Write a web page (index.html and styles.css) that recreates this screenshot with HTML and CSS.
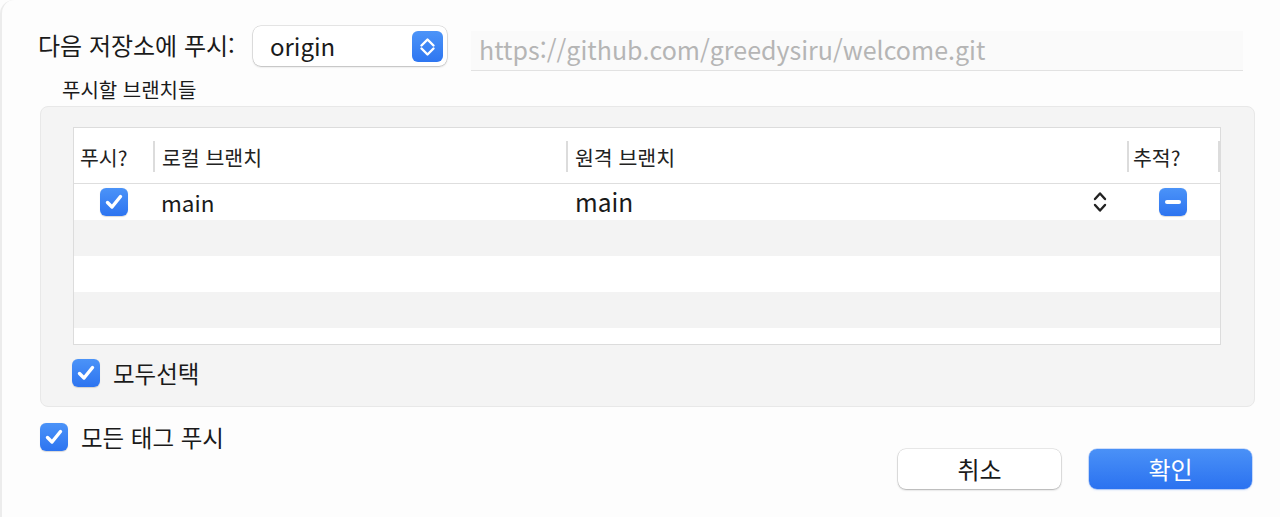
FILE: index.html
```html
<!DOCTYPE html>
<html lang="ko">
<head>
<meta charset="utf-8">
<title>푸시</title>
<link rel="stylesheet" href="styles.css">
</head>
<body>
<div class="dialog">
  <div class="remote-row">
    <span class="remote-label">다음 저장소에 푸시:</span>
    <div class="popup">
      <span class="popup-text">origin</span>
      <span class="stepper">
        <svg width="31" height="31" viewBox="0 0 31 31"><path d="M9.5 14.5 L15.5 8.5 L21.5 14.5 M9.5 17.5 L15.5 23.5 L21.5 17.5" fill="none" stroke="#fff" stroke-width="2.4" stroke-linecap="round" stroke-linejoin="round"/></svg>
      </span>
    </div>
    <div class="url-field">https://github.com/greedysiru/welcome.git</div>
  </div>

  <div class="branches-label">푸시할 브랜치들</div>

  <div class="group">
    <div class="table">
      <div class="thead">
        <div class="th c1"><span>푸시?</span></div>
        <div class="th c2"><span class="sep"></span><span>로컬 브랜치</span></div>
        <div class="th c3"><span class="sep"></span><span>원격 브랜치</span></div>
        <div class="th c4"><span class="sep"></span><span>추적?</span></div>
        <div class="th c5"><span class="sep"></span></div>
      </div>
      <div class="tbody">
        <div class="tr">
          <div class="td c1 center">
            <span class="checkbox"><svg width="28" height="28" viewBox="0 0 28 28"><path d="M7.5 14.5 L12 19 L20.5 8.5" fill="none" stroke="#fff" stroke-width="3.4" stroke-linecap="round" stroke-linejoin="round"/></svg></span>
          </div>
          <div class="td c2"><span class="local">main</span></div>
          <div class="td c3 remote">
            <span class="remote-name">main</span>
            <svg class="row-stepper" width="14" height="24" viewBox="0 0 14 24"><path d="M2 9 L7 3.5 L12 9 M2 15 L7 20.5 L12 15" fill="none" stroke="#222" stroke-width="2.4" stroke-linecap="round" stroke-linejoin="round"/></svg>
          </div>
          <div class="td c4 center">
            <span class="checkbox"><span class="minus"></span></span>
          </div>
          <div class="td c5"></div>
        </div>
        <div class="tr alt"></div>
        <div class="tr"></div>
        <div class="tr alt"></div>
        <div class="tr short"></div>
      </div>
    </div>
    <div class="check-row select-all">
      <span class="checkbox"><svg width="28" height="28" viewBox="0 0 28 28"><path d="M7.5 14.5 L12 19 L20.5 8.5" fill="none" stroke="#fff" stroke-width="3.4" stroke-linecap="round" stroke-linejoin="round"/></svg></span>
      <span class="check-label">모두선택</span>
    </div>
  </div>

  <div class="footer">
    <div class="check-row tags">
      <span class="checkbox"><svg width="28" height="28" viewBox="0 0 28 28"><path d="M7.5 14.5 L12 19 L20.5 8.5" fill="none" stroke="#fff" stroke-width="3.4" stroke-linecap="round" stroke-linejoin="round"/></svg></span>
      <span class="check-label">모든 태그 푸시</span>
    </div>
    <div class="buttons">
      <button class="btn cancel">취소</button>
      <button class="btn ok">확인</button>
    </div>
  </div>
</div>
</body>
</html>
```

FILE: styles.css
```css
* { box-sizing: border-box; }

html, body {
  margin: 0;
  padding: 0;
  height: 100%;
}

body {
  background: #fdfdfd;
  font-family: "Noto Sans CJK KR", "Noto Sans", sans-serif;
  color: #1a1a1a;
  overflow: hidden;
}

.dialog {
  height: 517px;
  border-left: 2px solid #ececec;
  border-top-left-radius: 14px;
  padding-top: 26px;
}

/* top row */
.remote-row {
  display: flex;
  align-items: flex-start;
  margin-left: 36px;
  height: 45px;
}

.remote-label {
  font-size: 24px;
  line-height: 38px;
  width: 200px;
  white-space: nowrap;
  margin-right: 15px;
}

.popup {
  width: 194px;
  height: 40px;
  background: #fff;
  border-radius: 8px;
  box-shadow: 0 0 0 0.5px rgba(0,0,0,0.18), 0 1px 2px rgba(0,0,0,0.18);
  display: flex;
  align-items: center;
  justify-content: space-between;
  padding: 0 4px 0 17px;
}

.popup-text {
  font-size: 24px;
  line-height: 38px;
  color: #1a1a1a;
}

.stepper {
  width: 31px;
  height: 31px;
  border-radius: 6px;
  background: linear-gradient(#4c94f8, #2e76f1);
  display: flex;
}

.url-field {
  margin-left: 24px;
  margin-top: 5px;
  width: 772px;
  height: 40px;
  background: #fafafa;
  border-bottom: 1.5px solid #e2e2e2;
  color: #b5b5b5;
  font-size: 25px;
  line-height: 37px;
  padding-left: 8px;
  white-space: nowrap;
}

.branches-label {
  margin: 7px 0 0 60px;
  font-size: 20px;
  line-height: 24px;
  height: 28px;
}

/* group box */
.group {
  margin-left: 38px;
  width: 1215px;
  height: 301px;
  background: #f4f4f4;
  border: 1px solid #e8e8e8;
  border-radius: 8px;
  padding: 20px 31px 0 32px;
}

.table {
  width: 1148px;
  height: 218px;
  border: 1px solid #dcdcdc;
  background: #fff;
}

.thead {
  display: flex;
  height: 56px;
  padding-top: 13px;
  border-bottom: 1.5px solid #dedede;
}

.th {
  display: flex;
  align-items: center;
  height: 31px;
  font-size: 20.5px;
  color: #222;
  white-space: nowrap;
}

.sep {
  width: 1.5px;
  height: 31px;
  background: #dcdcdc;
  flex: none;
}

.c1 { width: 79px; }
.c2 { width: 413px; }
.c3 { width: 561px; }
.c4 { width: 91px; }
.c5 { width: 2px; }

.th.c1 { padding-left: 6px; }
.th.c2 span + span { margin-left: 7.5px; }
.th.c3 span + span { margin-left: 7.5px; }
.th.c4 span + span { margin-left: 4.5px; }

.tbody {
  display: flex;
  flex-direction: column;
}

.tr {
  display: flex;
  height: 36px;
  background: #fff;
}

.tr.alt { background: #f3f3f3; }
.tr.short { height: 16px; }

.td {
  display: flex;
  align-items: center;
}

.td.center { justify-content: center; }

.local {
  font-size: 22.5px;
  line-height: 28px;
  margin-left: 8px;
  color: #1a1a1a;
}

.remote {
  justify-content: space-between;
  padding: 0 20px 0 9px;
}

.remote-name {
  font-size: 24.5px;
  line-height: 28px;
  color: #1a1a1a;
}

.checkbox {
  width: 28px;
  height: 28px;
  border-radius: 6px;
  background: linear-gradient(#4b93f8, #2d74f0);
  box-shadow: 0 0.5px 1px rgba(0,0,0,0.15);
  display: flex;
  align-items: center;
  justify-content: center;
  flex: none;
}

.minus {
  width: 16px;
  height: 4px;
  border-radius: 2px;
  background: #fff;
}

.td.c1 .checkbox { margin-left: 1px; }

.check-row {
  display: flex;
  align-items: center;
  height: 28px;
}

.check-label {
  font-size: 23.5px;
  line-height: 28px;
  color: #1a1a1a;
  white-space: nowrap;
}

.select-all {
  margin-top: 14px;
  margin-left: -1px;
}

.select-all .check-label { margin-left: 13px; }

/* footer */
.footer {
  display: flex;
  justify-content: space-between;
  align-items: flex-start;
  margin: 16px 28px 0 38px;
}

.tags .check-label { margin-left: 13px; }

.buttons {
  display: flex;
  gap: 28px;
  margin-top: 26px;
}

.btn {
  width: 163px;
  height: 40px;
  border: none;
  border-radius: 8px;
  font-family: inherit;
  font-size: 24px;
  line-height: 38px;
  padding: 0;
}

.cancel {
  background: #fff;
  color: #1a1a1a;
  box-shadow: 0 0 0 0.5px rgba(0,0,0,0.15), 0 1px 2px rgba(0,0,0,0.25);
}

.ok {
  background: linear-gradient(#4a91f7, #2b72f0);
  color: #fff;
  box-shadow: 0 0 0 0.5px rgba(40,110,240,0.4), 0 1px 2px rgba(40,110,240,0.25);
}
```
